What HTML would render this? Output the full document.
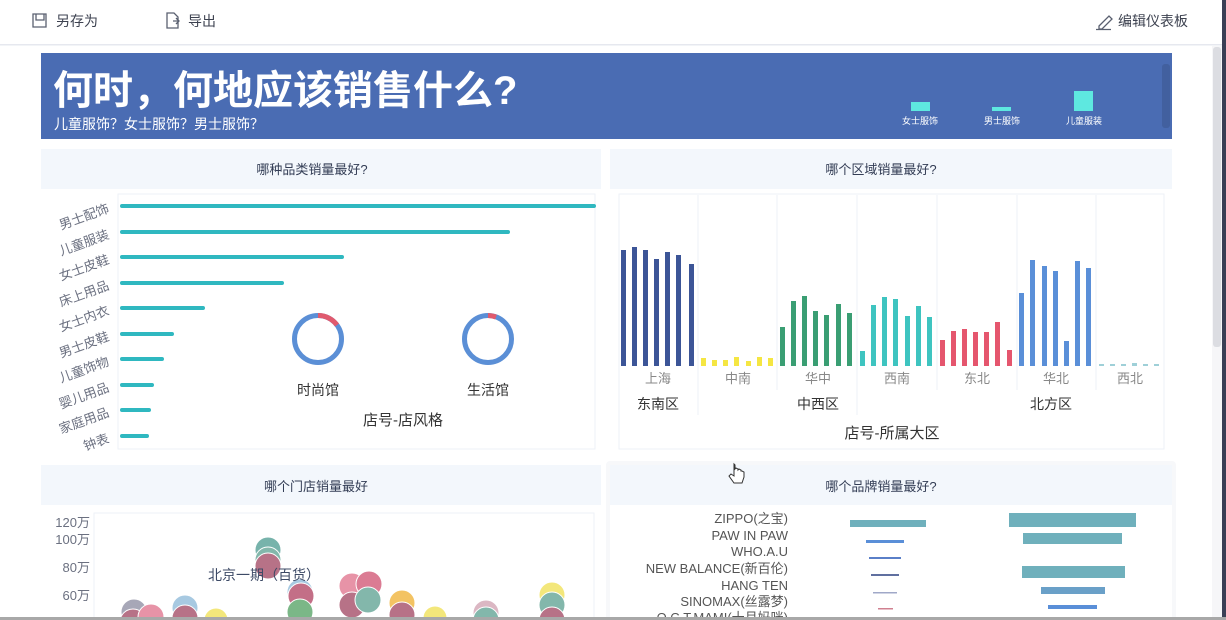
<!DOCTYPE html>
<html><head><meta charset="utf-8"><style>
html,body{margin:0;padding:0;width:1226px;height:620px;overflow:hidden;background:#fff;font-family:"Liberation Sans","Noto Sans CJK SC",sans-serif;}
svg{position:absolute;left:0;top:0}
text{font-family:"Liberation Sans","Noto Sans CJK SC",sans-serif}
</style></head><body>
<svg width="1226" height="620" viewBox="0 0 1226 620" xmlns="http://www.w3.org/2000/svg">
<rect width="1226" height="620" fill="#fff"/>
<rect x="0" y="44" width="1226" height="1.5" fill="#e6e8ef"/>
<g fill="none" stroke="#5a6070" stroke-width="1.3">
<path d="M33 14h13v13H33z M36 14v6h8v-6"/>
<path d="M167 13h7l4 4v11h-11z M173 21h6 M176 18l3 3-3 3"/>
<path d="M1099 26l10-10 3 3-10 10h-3z M1096 29.5h15"/>
</g>
<text x="56" y="26" font-size="14" fill="#3d4250">另存为</text>
<text x="188" y="26" font-size="14" fill="#3d4250">导出</text>
<text x="1118" y="26" font-size="14" fill="#3d4250">编辑仪表板</text>
<rect x="1212" y="46" width="10" height="574" fill="#f6f6f8"/>
<rect x="1213" y="47" width="8" height="300" rx="3" fill="#dcdde2"/>
<rect x="1222" y="0" width="4" height="620" fill="#3a3f55"/>
<rect x="41" y="53" width="1131" height="86" fill="#4a6cb3"/>
<rect x="1162" y="64" width="8" height="64" rx="3" fill="#42609f"/>
<text x="53" y="104" font-size="40" font-weight="bold" fill="#fff">何时，何地应该销售什么?</text>
<text x="54" y="129" font-size="14" fill="#fff">儿童服饰？女士服饰？男士服饰？</text>
<rect x="911" y="102" width="19" height="9" fill="#5ee8e0"/>
<rect x="992" y="107" width="19" height="4" fill="#5ee8e0"/>
<rect x="1074" y="91" width="19" height="20" fill="#5ee8e0"/>
<text x="920" y="124" font-size="9" fill="#fff" text-anchor="middle">女士服饰</text>
<text x="1002" y="124" font-size="9" fill="#fff" text-anchor="middle">男士服饰</text>
<text x="1084" y="124" font-size="9" fill="#fff" text-anchor="middle">儿童服装</text>
<rect x="41" y="149" width="560" height="40" fill="#f3f7fc"/>
<rect x="610" y="149" width="562" height="40" fill="#f3f7fc"/>
<text x="312" y="174" font-size="13" fill="#333d55" text-anchor="middle">哪种品类销量最好?</text>
<text x="881" y="174" font-size="13" fill="#333d55" text-anchor="middle">哪个区域销量最好?</text>
<rect x="118" y="194" width="477" height="255" fill="none" stroke="#eef1f7"/>
<g stroke="#2fb8c0" stroke-width="4" stroke-linecap="round">
<path d="M122 206H594 M122 232H508 M122 257H342 M122 283H282 M122 308H203 M122 334H172 M122 359H162 M122 385H152 M122 410H149 M122 436H147"/>
</g>
<g font-size="13" fill="#6b7080" text-anchor="end">
<text transform="translate(110,212) rotate(-20)">男士配饰</text>
<text transform="translate(110,238) rotate(-20)">儿童服装</text>
<text transform="translate(110,263) rotate(-20)">女士皮鞋</text>
<text transform="translate(110,289) rotate(-20)">床上用品</text>
<text transform="translate(110,314) rotate(-20)">女士内衣</text>
<text transform="translate(110,340) rotate(-20)">男士皮鞋</text>
<text transform="translate(110,365) rotate(-20)">儿童饰物</text>
<text transform="translate(110,391) rotate(-20)">婴儿用品</text>
<text transform="translate(110,416) rotate(-20)">家庭用品</text>
<text transform="translate(110,442) rotate(-20)">钟表</text>
</g>
<circle cx="318" cy="339" r="23.5" fill="none" stroke="#5b8fd6" stroke-width="5"/>
<path d="M318 315.5 A23.5 23.5 0 0 1 337 325" fill="none" stroke="#e05a6e" stroke-width="5"/>
<circle cx="488" cy="339" r="23.5" fill="none" stroke="#5b8fd6" stroke-width="5"/>
<path d="M488 315.5 A23.5 23.5 0 0 1 496 317" fill="none" stroke="#e05a6e" stroke-width="5"/>
<text x="318" y="395" font-size="14" fill="#333" text-anchor="middle">时尚馆</text>
<text x="488" y="395" font-size="14" fill="#333" text-anchor="middle">生活馆</text>
<text x="403" y="425" font-size="15" fill="#333" text-anchor="middle">店号-店风格</text>
<rect x="619" y="194" width="545" height="255" fill="none" stroke="#eef1f7"/>
<g stroke="#eef1f7"><path d="M698 195V415 M777 195V390 M857 195V415 M937 195V390 M1017 195V390 M1096 195V390"/></g>
<g fill="#3c5597">
<rect x="621" y="250" width="5" height="116"/><rect x="632" y="247" width="5" height="119"/><rect x="643" y="250" width="5" height="116"/><rect x="654" y="259" width="5" height="107"/><rect x="665" y="252" width="5" height="114"/><rect x="676" y="255" width="5" height="111"/><rect x="689" y="264" width="5" height="102"/>
</g>
<g fill="#f5e642">
<rect x="701" y="358" width="5" height="8"/><rect x="712" y="360" width="5" height="6"/><rect x="723" y="360" width="5" height="6"/><rect x="734" y="357" width="5" height="9"/><rect x="746" y="361" width="5" height="5"/><rect x="757" y="357" width="5" height="9"/><rect x="768" y="358" width="5" height="8"/>
</g>
<g fill="#3a9e73">
<rect x="780" y="327" width="5" height="39"/><rect x="791" y="301" width="5" height="65"/><rect x="802" y="296" width="5" height="70"/><rect x="813" y="311" width="5" height="55"/><rect x="824" y="315" width="5" height="51"/><rect x="836" y="304" width="5" height="62"/><rect x="847" y="313" width="5" height="53"/>
</g>
<g fill="#3ec4c0">
<rect x="860" y="351" width="5" height="15"/><rect x="871" y="305" width="5" height="61"/><rect x="882" y="297" width="5" height="69"/><rect x="893" y="299" width="5" height="67"/><rect x="905" y="316" width="5" height="50"/><rect x="916" y="306" width="5" height="60"/><rect x="927" y="317" width="5" height="49"/>
</g>
<g fill="#e5566e">
<rect x="940" y="340" width="5" height="26"/><rect x="951" y="331" width="5" height="35"/><rect x="962" y="329" width="5" height="37"/><rect x="973" y="332" width="5" height="34"/><rect x="984" y="332" width="5" height="34"/><rect x="995" y="322" width="5" height="44"/><rect x="1007" y="350" width="5" height="16"/>
</g>
<g fill="#5a8fd8">
<rect x="1019" y="293" width="5" height="73"/><rect x="1030" y="260" width="5" height="106"/><rect x="1042" y="266" width="5" height="100"/><rect x="1053" y="271" width="5" height="95"/><rect x="1064" y="341" width="5" height="25"/><rect x="1075" y="261" width="5" height="105"/><rect x="1086" y="268" width="5" height="98"/>
</g>
<g fill="#9fd0d8"><rect x="1099" y="364" width="5" height="2"/><rect x="1110" y="364" width="5" height="2"/><rect x="1121" y="364" width="5" height="2"/><rect x="1132" y="363" width="5" height="3"/><rect x="1143" y="364" width="5" height="2"/><rect x="1154" y="364" width="5" height="2"/></g>
<g font-size="13" fill="#888" text-anchor="middle">
<text x="658" y="383">上海</text><text x="738" y="383">中南</text><text x="818" y="383">华中</text><text x="897" y="383">西南</text><text x="977" y="383">东北</text><text x="1056" y="383">华北</text><text x="1130" y="383">西北</text>
</g>
<g font-size="14" fill="#333" text-anchor="middle">
<text x="658" y="409">东南区</text><text x="818" y="409">中西区</text><text x="1051" y="409">北方区</text>
</g>
<text x="892" y="438" font-size="15" fill="#333" text-anchor="middle">店号-所属大区</text>
<rect x="41" y="465" width="560" height="40" fill="#f3f7fc"/>
<rect x="606" y="461" width="570" height="160" rx="4" fill="#f7f8fa"/>
<rect x="610" y="465" width="562" height="155" fill="#fff"/>
<rect x="610" y="465" width="562" height="40" fill="#f3f7fc"/>
<text x="316" y="491" font-size="13" fill="#333d55" text-anchor="middle">哪个门店销量最好</text>
<text x="881" y="491" font-size="13" fill="#333d55" text-anchor="middle">哪个品牌销量最好?</text>
<rect x="94" y="513" width="500" height="110" fill="none" stroke="#eef1f7"/>
<g font-size="13" fill="#6b7080" text-anchor="end">
<text x="90" y="527">120万</text><text x="90" y="544">100万</text><text x="90" y="572">80万</text><text x="90" y="600">60万</text>
</g>
<g opacity="0.75" stroke="#fff" stroke-width="1">
<circle cx="134" cy="612" r="13" fill="#8a8aa0"/><circle cx="133" cy="622" r="13" fill="#a0445f"/>
<circle cx="151" cy="617" r="13" fill="#e0708a"/><circle cx="185" cy="608" r="13" fill="#8ab8d8"/><circle cx="185" cy="618" r="13" fill="#a0445f"/>
<circle cx="216" cy="620" r="12" fill="#f0e050"/>
<circle cx="268" cy="550" r="13" fill="#4a9a90"/><circle cx="268" cy="560" r="13" fill="#5aa090"/><circle cx="268" cy="566" r="13" fill="#a0445f"/>
<circle cx="300" cy="592" r="13" fill="#8ab8d8"/><circle cx="301" cy="596" r="13" fill="#b04060"/><circle cx="300" cy="612" r="13" fill="#50a060"/>
<circle cx="352" cy="586" r="13" fill="#e0708a"/><circle cx="352" cy="605" r="13" fill="#a0445f"/>
<circle cx="369" cy="584" r="13" fill="#d05070"/><circle cx="368" cy="600" r="13" fill="#5aa090"/>
<circle cx="402" cy="603" r="13" fill="#f0b030"/><circle cx="402" cy="615" r="13" fill="#a0445f"/>
<circle cx="435" cy="618" r="12" fill="#f0e050"/><circle cx="486" cy="613" r="13" fill="#d0a0b0"/><circle cx="486" cy="620" r="13" fill="#5aa090"/>
<circle cx="552" cy="595" r="13" fill="#f0e050"/><circle cx="552" cy="605" r="13" fill="#5aa090"/><circle cx="552" cy="620" r="13" fill="#a0445f"/>
</g>
<text x="264" y="580" font-size="14" fill="#3d4a66" text-anchor="middle">北京一期（百货）</text>
<g font-size="13" fill="#555" text-anchor="end">
<text x="788" y="523">ZIPPO(之宝)</text><text x="788" y="540">PAW IN PAW</text><text x="788" y="556">WHO.A.U</text><text x="788" y="573">NEW BALANCE(新百伦)</text><text x="788" y="590">HANG TEN</text><text x="788" y="606">SINOMAX(丝露梦)</text><text x="788" y="622">O.C.T.MAMI(十月妈咪)</text>
</g>
<rect x="850" y="520" width="76" height="7" fill="#6fb0bc"/>
<rect x="866" y="540" width="38" height="3" fill="#5a8fd8"/>
<rect x="869" y="557" width="32" height="2" fill="#5a7fc8"/>
<rect x="871" y="574" width="28" height="2" fill="#6070a0"/>
<rect x="873" y="592" width="24" height="1.5" fill="#a0a8c8"/>
<rect x="878" y="608" width="15" height="1.5" fill="#d08090"/>
<rect x="1009" y="513" width="127" height="14" fill="#6fb0bc"/>
<rect x="1023" y="533" width="99" height="11" fill="#6fb0bc"/>
<rect x="1022" y="566" width="103" height="12" fill="#6fb0bc"/>
<rect x="1041" y="587" width="64" height="7" fill="#6aa0c8"/>
<rect x="1048" y="605" width="49" height="4" fill="#5a8fd8"/>
<path d="M734 466v10l-3-2-2 2 5 7h8l2-6v-5l-2-1-1 0v-1l-2-1-1 1v-1l-2 -1-1 1v-4l-1-1z" fill="#fff" stroke="#333" stroke-width="1"/>
<rect x="0" y="617" width="1226" height="3" fill="#a8a8a8"/>
</svg>
</body></html>
